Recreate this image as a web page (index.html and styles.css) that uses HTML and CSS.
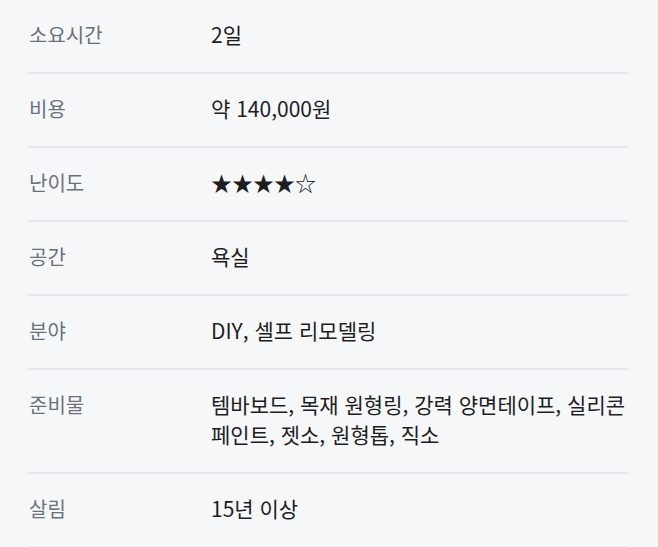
FILE: index.html
```html
<!DOCTYPE html>
<html lang="ko">
<head>
<meta charset="utf-8">
<link rel="stylesheet" href="styles.css">
</head>
<body>
<div class="page">
  <dl class="info">
    <div class="row"><dt>소요시간</dt><dd>2일</dd></div>
    <div class="row"><dt>비용</dt><dd>약 140,000원</dd></div>
    <div class="row"><dt>난이도</dt><dd class="stars">★★★★☆</dd></div>
    <div class="row"><dt>공간</dt><dd>욕실</dd></div>
    <div class="row"><dt>분야</dt><dd>DIY, 셀프 리모델링</dd></div>
    <div class="row"><dt>준비물</dt><dd>템바보드, 목재 원형링, 강력 양면테이프, 실리콘 페인트, 젯소, 원형톱, 직소</dd></div>
    <div class="row"><dt>살림</dt><dd>15년 이상</dd></div>
  </dl>
</div>
</body>
</html>
```

FILE: styles.css
```css
html, body {
  margin: 0;
  padding: 0;
  background: #f6f7f9;
}
body {
  font-family: "Noto Sans CJK KR", "Noto Sans", sans-serif;
  font-size: 21px;
  line-height: 30px;
  color: #1d1d1f;
}
.page {
  padding: 0 30px 0 28px;
}
.info {
  margin: 0;
}
.row {
  display: grid;
  grid-template-columns: 183px 1fr;
  align-items: start;
  padding: 19px 0 23px;
  border-bottom: 2px solid #e6e8eb;
}
.row dt {
  color: #6b717a;
  font-size: 20px;
  line-height: 28px;
  padding: 2px 0 0 1px;
}
.row dd {
  margin: 0;
  word-break: keep-all;
}
```
